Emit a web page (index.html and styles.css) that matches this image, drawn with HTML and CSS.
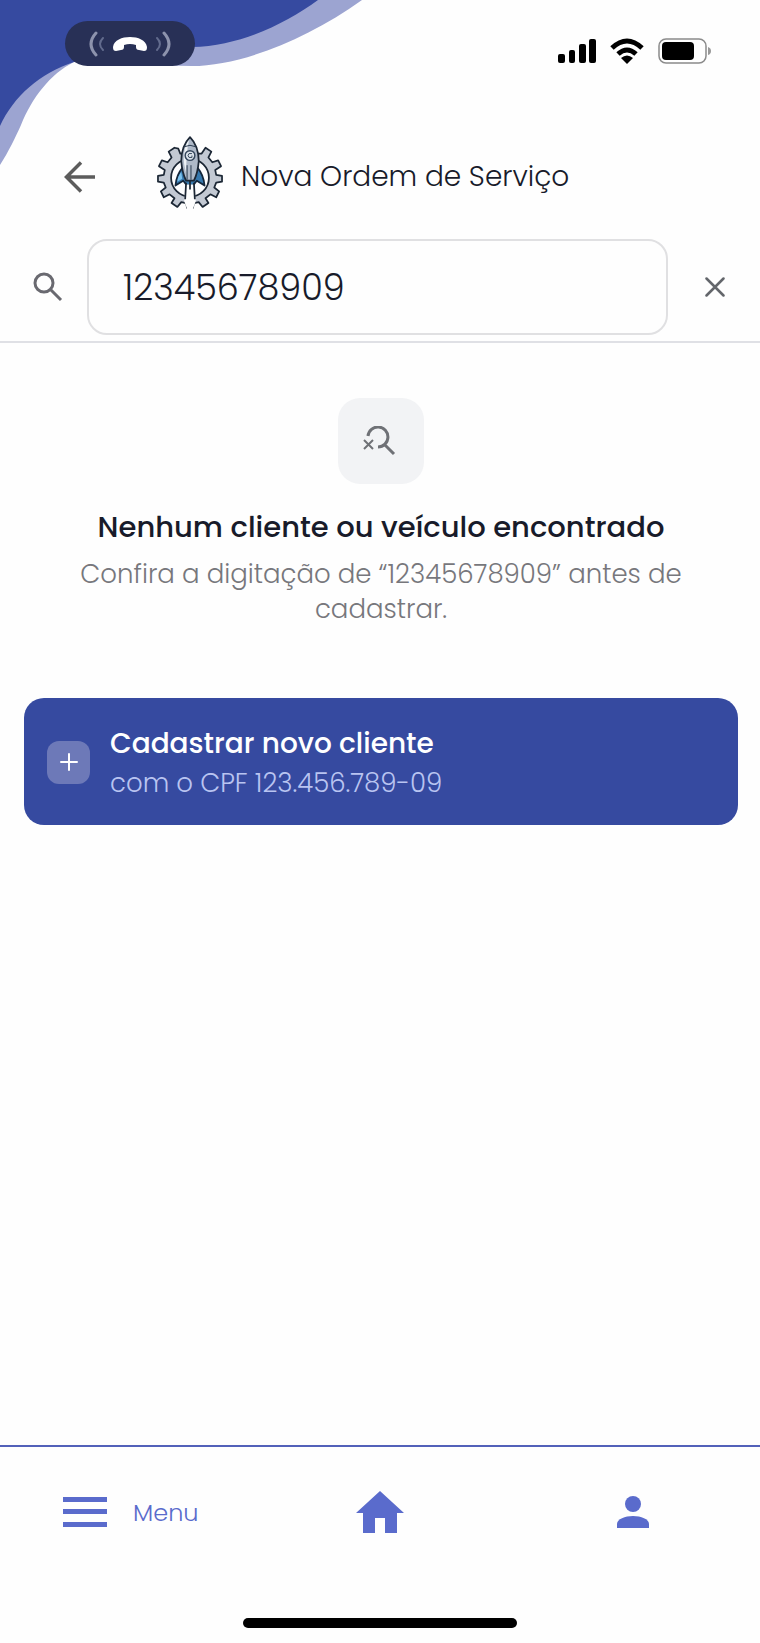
FILE: index.html
```html
<!DOCTYPE html>
<html lang="pt-BR">
<head>
<meta charset="utf-8">
<meta name="viewport" content="width=device-width, initial-scale=1">
<title>Nova Ordem de Serviço</title>
<link rel="stylesheet" href="styles.css">
</head>
<body>
<svg class="wave" width="380" height="170" viewBox="0 0 380 170" aria-hidden="true">
  <path fill="#9ca4d1" d="M0 0H362C306 40 240 66 192 66C145 66 105 59 74 62C50 74 32 98 21 125C15 138 9 151 0 165Z"/>
  <path fill="#364aa0" d="M0 0H318C285 24 240 46 192 47C145 56 105 53 74 62C40 73 14 96 0 126Z"/>
</svg>
<div class="status">
  <div class="call-pill">
    <svg width="82" height="26" viewBox="0 0 82 26" fill="none" stroke-linecap="round" role="img" aria-label="Chamada em andamento">
      <path stroke="#8d93ad" stroke-width="3" d="M7 2Q-3 13 7 24M75 2Q85 13 75 24"/>
      <path stroke="#626b8d" stroke-width="2" d="M14 7Q8 13 14 19M68 7Q74 13 68 19"/>
      <path fill="#fff" d="M24 16C25 9 33 6 41 6S57 9 58 16C58 19 57 20 55 20L50 19C48 19 47 18 47 16V14Q41 12 35 14V16C35 18 34 19 32 19L27 20C25 20 24 19 24 16Z"/>
    </svg>
  </div>
  <div class="indicators">
    <svg width="38" height="26" viewBox="0 0 38 26" role="img" aria-label="Sinal">
      <rect x="0" y="16" width="7" height="9" rx="2"/><rect x="11" y="12" width="6" height="13" rx="2"/><rect x="21" y="6" width="7" height="19" rx="2"/><rect x="31" y="1" width="7" height="24" rx="2"/>
    </svg>
    <svg width="34" height="26" viewBox="0 0 34 26" fill="none" stroke="#000" stroke-width="5" role="img" aria-label="Wi-Fi">
      <path d="M2 10Q17 -4 32 10M8 16Q17 8 26 16"/><path fill="#000" stroke="none" d="M11 20Q17 15 23 20L17 26Z"/>
    </svg>
    <svg width="54" height="26" viewBox="0 0 54 26" role="img" aria-label="Bateria">
      <rect x="1" y="1" width="47" height="24" rx="7" fill="#fff" stroke="#8b8b8b" stroke-width="1.5"/><rect x="4" y="4" width="32" height="18" rx="4"/><path fill="#999" d="M50 9Q53 10 53 13T50 17Z"/>
    </svg>
  </div>
</div>

<header class="header">
  <button class="icon-button" type="button" aria-label="Voltar">
    <svg width="32" height="32" viewBox="0 0 32 32" fill="none" stroke="#5c5c5c" stroke-width="3.5"><path d="M31 16H3M17 1.500L2.500 16L17 30.500"/></svg>
  </button>
  <svg class="logo" width="66" height="76" viewBox="-1 0 68 76" stroke-linejoin="round" aria-hidden="true">
    <path fill="#c3c9d3" stroke="#1c2735" stroke-width="1.800" d="M23 19L21 14L17 13L11 17L14 23L10 28L4 26L1 32L7 36L6 41L0 42V48L6 49L8 54L3 58L6 64L12 61L17 65L14 70L20 74L24 69L29 70L30 75H36L37 70L42 69L46 74L52 70L49 65L54 61L60 64L63 58L58 54L60 49L66 48V42L60 41L59 36L65 32L62 26L56 28L52 23L55 17L49 13L45 19Z"/>
    <circle cx="33" cy="44" r="19.500" fill="#fdfdfe" stroke="#1c2735" stroke-width="1.800"/>
    <path fill="#3678ad" stroke="#14263b" stroke-width="1.800" d="M25 34Q19 41 18 52L26 47L30 52H36L40 47L48 52Q47 41 41 34Z"/>
    <path fill="#7cc2ed" d="M24 38Q20 43 20 48L25 45Z"/>
    <path fill="#fefefe" d="M29 51L27 68L30 76H36L39 68L37 51Z"/>
    <path fill="none" stroke="#1c2735" stroke-width="1.800" d="M29 49L28 66M37 49L38 66M33 46V56"/>
    <path fill="#aeb9c8" stroke="#1c2735" stroke-width="1.800" d="M33 2C27 8 24 17 24 27Q25 39 29 47H37Q41 39 42 27C42 17 39 8 33 2Z"/>
    <path fill="#edf1f5" d="M32 5C27 11 26 21 27 30L29 39Q29 18 32 5Z"/>
    <path fill="none" stroke="#28394d" d="M27 12Q33 9 39 12M30 31V46M34 31V46"/>
    <circle cx="33" cy="21" r="5" fill="#dce3eb" stroke="#34465b" stroke-width="1.500"/>
    <path fill="none" stroke="#34465b" d="M35 19Q31 18 31 21T35 23V21"/>
  </svg>
  <h1 class="title">Nova Ordem de Serviço</h1>
</header>

<form class="search" role="search">
  <label class="search-label" for="busca" aria-label="Buscar cliente ou veículo">
    <svg width="30" height="30" viewBox="0 0 30 30" fill="none" stroke="#696970" stroke-width="3"><circle cx="11" cy="11" r="9"/><path d="M18 18L28 28"/></svg>
  </label>
  <input class="search-input" id="busca" type="text" value="12345678909">
  <button class="icon-button" type="reset" aria-label="Limpar busca">
    <svg width="20" height="20" viewBox="0 0 20 20" fill="none" stroke="#63666b" stroke-width="2.500" stroke-linecap="round"><path d="M1.500 1.500L18.500 18.500M18.500 1.500L1.500 18.500"/></svg>
  </button>
</form>

<main class="content">
  <section class="empty">
    <div class="empty-icon">
      <svg width="38" height="30" viewBox="0 0 38 30" fill="none" stroke="#6f7176" aria-hidden="true"><path stroke-width="3" d="M6 10A10 10 0 1 1 16 21M22 18L32 28"/><path stroke-width="2" d="M2 14L11 23M11 14L2 23"/></svg>
    </div>
    <h2 class="empty-title">Nenhum cliente ou veículo encontrado</h2>
    <p class="empty-text">Confira a digitação de “12345678909” antes de cadastrar.</p>
  </section>
  <button class="register" type="button">
    <span class="plus"><svg width="18" height="18" viewBox="0 0 18 18" stroke="#fff" stroke-width="2" stroke-linecap="round" aria-hidden="true"><path d="M9 1V17M1 9H17"/></svg></span>
    <span class="register-copy"><span class="register-title">Cadastrar novo cliente</span><span class="register-text">com o CPF 123.456.789-09</span></span>
  </button>
</main>

<nav class="nav" aria-label="Principal">
  <a class="nav-item nav-menu" href="#menu"><svg width="44" height="30" viewBox="0 0 44 30" fill="currentColor" aria-hidden="true"><path d="M0 0H44V5H0ZM0 12H44V17H0ZM0 25H44V30H0Z"/></svg><span>Menu</span></a>
  <a class="nav-item" href="#inicio" aria-label="Início"><svg width="48" height="42" viewBox="0 0 48 42" fill="currentColor"><path d="M24 0L48 22H41V42H29V27H19V42H7V22H0Z"/></svg></a>
  <a class="nav-item" href="#perfil" aria-label="Perfil"><svg width="32" height="32" viewBox="0 0 32 32" fill="currentColor"><circle cx="16" cy="8" r="8"/><path d="M0 32V28C0 23 8 20 16 20S32 23 32 28V32Z"/></svg></a>
</nav>
<div class="home-bar"></div>
</body>
</html>
```

FILE: styles.css
```css
* { box-sizing: border-box; }

body {
  position: relative;
  display: flex;
  flex-direction: column;
  min-height: 100vh;
  margin: 0;
  background: #fefefe;
  color: #181b2a;
  font-family: Poppins, Inter, "Liberation Sans", sans-serif;
}

svg { display: block; flex: none; }
h1, h2, p { margin: 0; }
button { padding: 0; border: 0; background: none; font: inherit; cursor: pointer; }

.wave { position: absolute; top: 0; left: 0; z-index: -1; }

.status {
  display: flex;
  justify-content: space-between;
  align-items: flex-start;
  padding: 21px 48px 0 65px;
}
.call-pill {
  display: grid;
  place-items: center;
  width: 130px;
  height: 45px;
  border-radius: 23px;
  background: #283056;
}
.indicators { display: flex; gap: 14px; padding-top: 17px; }

.header {
  display: flex;
  align-items: center;
  padding: 68px 24px 29px 64px;
}
.header .icon-button,
.title { padding-top: 10px; }
.logo { margin-left: 61px; }
.title {
  margin-left: 18px;
  font-size: 28px;
  font-weight: 300;
  line-height: 40px;
}

.search {
  display: flex;
  align-items: center;
  padding: 0 35px 6px 33px;
  border-bottom: 2px solid #dfe0e5;
}
.search-label { margin-right: 24px; }
.search-input {
  flex: 1;
  min-width: 0;
  height: 96px;
  margin-right: 37px;
  padding: 0 34px;
  border: 2px solid #e0e0e2;
  border-radius: 20px;
  background: transparent;
  color: inherit;
  font: inherit;
  font-size: 35px;
  font-weight: 300;
  outline: none;
}

.content { padding: 55px 22px 40px 24px; }
.empty {
  display: flex;
  flex-direction: column;
  align-items: center;
  padding: 0 50px;
  text-align: center;
}
.empty-icon {
  display: grid;
  place-items: center;
  width: 86px;
  height: 86px;
  border-radius: 22px;
  background: #f2f3f5;
}
.empty-title {
  margin-top: 23px;
  font-size: 29px;
  font-weight: 500;
  line-height: 40px;
}
.empty-text {
  margin-top: 10px;
  color: #77777c;
  font-size: 26px;
  font-weight: 300;
  line-height: 35px;
}
.register {
  display: flex;
  align-items: center;
  width: 100%;
  margin-top: 71px;
  padding: 25px 24px 24px 23px;
  border-radius: 20px;
  background: #364aa0;
  color: #fff;
  text-align: left;
}
.plus {
  display: grid;
  place-items: center;
  width: 43px;
  height: 43px;
  border-radius: 12px;
  background: #6d79b8;
}
.register-copy { display: grid; margin-left: 20px; }
.register-title { font-size: 28px; font-weight: 500; line-height: 42px; }
.register-text { color: #b9c4f1; font-size: 26px; font-weight: 300; line-height: 36px; }

.nav {
  display: grid;
  grid-template-columns: repeat(3, 1fr);
  align-items: center;
  margin-top: auto;
  padding: 44px 0 85px;
  border-top: 2px solid #5361b9;
}
.nav-item {
  display: flex;
  align-items: center;
  justify-content: center;
  gap: 26px;
  color: #5a6bcc;
  font-size: 24px;
  font-weight: 300;
  text-decoration: none;
}
.nav-menu { justify-content: flex-start; padding-left: 63px; }
.home-bar {
  align-self: center;
  width: 36%;
  height: 10px;
  margin-bottom: 15px;
  border-radius: 5px;
  background: #000;
}
```
